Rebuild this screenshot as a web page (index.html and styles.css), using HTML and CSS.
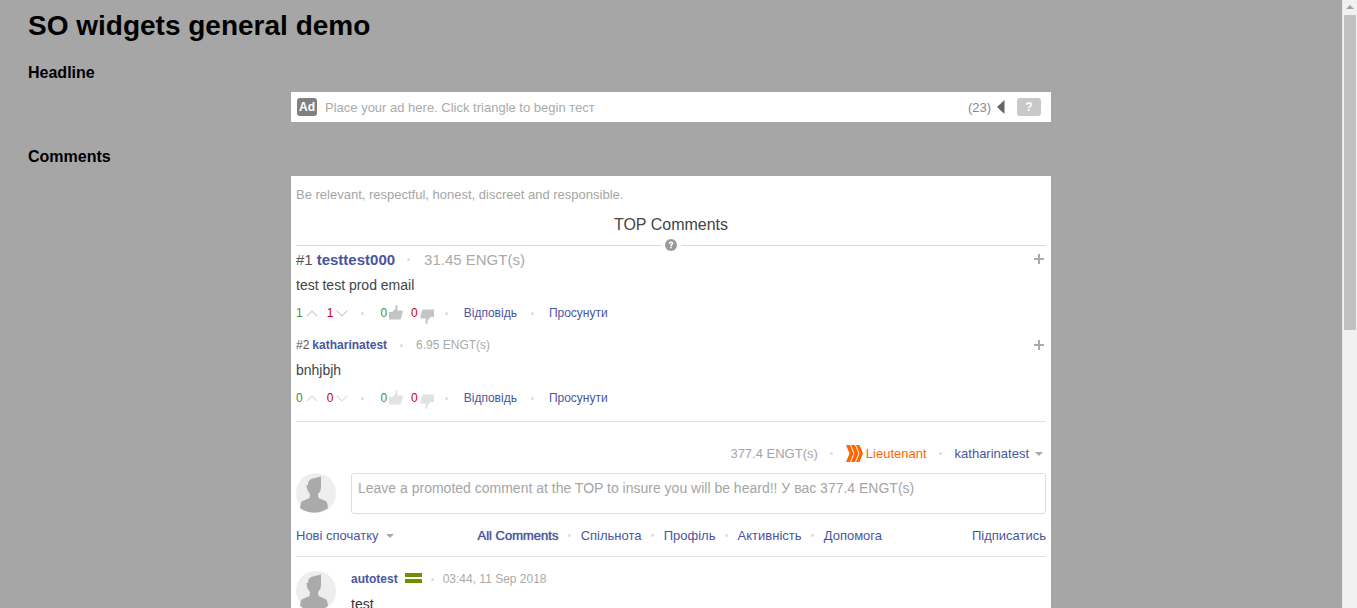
FILE: index.html
```html
<!DOCTYPE html>
<html lang="en">
<head>
  <meta charset="UTF-8">
  <title>SO widgets general demo</title>
  <link rel="stylesheet" href="styles.css">
</head>
<body>
<div class="page">
  <h1>SO widgets general demo</h1>

  <h3 class="section-head">Headline</h3>
  <div class="ad-bar">
    <span class="ad-badge">Ad</span>
    <span class="ad-text">Place your ad here. Click triangle to begin тест</span>
    <span class="ad-count">(23)</span>
    <svg class="ad-triangle" width="8" height="14" viewBox="0 0 8 14"><path d="M7.5 0v14L0 7z" fill="#666"/></svg>
    <span class="ad-help">?</span>
  </div>

  <h3 class="section-head section-comments">Comments</h3>
  <div class="widget">
    <p class="rules">Be relevant, respectful, honest, discreet and responsible.</p>
    <div class="top-title">TOP Comments</div>
    <div class="top-divider">
      <svg class="help-icon" width="12" height="12" viewBox="0 0 12 12">
        <circle cx="6" cy="6" r="6" fill="#999"/>
        <path d="M3.700 4.700c0-1.400 1-2.300 2.400-2.300s2.300.8 2.300 1.900c0 1.500-1.600 1.500-1.600 2.700H5.200c0-1.800 1.500-1.700 1.500-2.500 0-.4-.2-.7-.7-.7s-.7.300-.8.900z" fill="#fff"/>
        <rect x="5.200" y="7.700" width="1.600" height="1.600" fill="#fff"/>
      </svg>
    </div>

    <div class="top-comment first">
      <div class="tc-head">
        <span class="rank">#1</span>
        <a class="tc-name">testtest000</a>
        <span class="dot"></span>
        <span class="tc-score">31.45 ENGT(s)</span>
        <svg class="plus" width="10" height="10" viewBox="0 0 10 10"><path d="M4 0h2v4h4v2H6v4H4V6H0V4h4z" fill="#aaa"/></svg>
      </div>
      <div class="tc-body">test test prod email</div>
      <div class="actions">
        <span class="num green">1</span>
        <svg class="chev" width="12" height="7" viewBox="0 0 12 7"><path d="M.7 6.300 6 1l5.300 5.300" fill="none" stroke="#ccc" stroke-width="1.200"/></svg>
        <span class="num red">1</span>
        <svg class="chev" width="12" height="7" viewBox="0 0 12 7"><path d="M.7.700 6 6 11.300.700" fill="none" stroke="#ccc" stroke-width="1.200"/></svg>
        <span class="dot d1"></span>
        <span class="num green">0</span>
        <svg class="thumb" width="14" height="15" viewBox="0 0 14 15"><path d="M0 7h3.500l3-3.500V0c2 0 2.500 1.500 2 3L8 5.500h4.500c1 0 1.500 1 1.200 1.800L12 13.500c-.3.700-.8 1-1.500 1H0z" fill="#c4c4c4"/></svg>
        <span class="num red">0</span>
        <svg class="thumb down" width="14" height="15" viewBox="0 0 14 15"><path d="M0 7h3.500l3-3.500V0c2 0 2.500 1.500 2 3L8 5.500h4.500c1 0 1.500 1 1.200 1.800L12 13.500c-.3.700-.8 1-1.500 1H0z" fill="#c4c4c4" transform="rotate(180 7 7.500)"/></svg>
        <span class="dot d2"></span>
        <a class="link">Відповідь</a>
        <span class="dot d3"></span>
        <a class="link">Просунути</a>
      </div>
    </div>

    <div class="top-comment second">
      <div class="tc-head small">
        <span class="rank">#2</span>
        <a class="tc-name">katharinatest</a>
        <span class="dot"></span>
        <span class="tc-score">6.95 ENGT(s)</span>
        <svg class="plus" width="10" height="10" viewBox="0 0 10 10"><path d="M4 0h2v4h4v2H6v4H4V6H0V4h4z" fill="#aaa"/></svg>
      </div>
      <div class="tc-body">bnhjbjh</div>
      <div class="actions faded">
        <span class="num green">0</span>
        <svg class="chev" width="12" height="7" viewBox="0 0 12 7"><path d="M.7 6.300 6 1l5.300 5.300" fill="none" stroke="#ddd" stroke-width="1.200"/></svg>
        <span class="num red">0</span>
        <svg class="chev" width="12" height="7" viewBox="0 0 12 7"><path d="M.7.700 6 6 11.300.700" fill="none" stroke="#ddd" stroke-width="1.200"/></svg>
        <span class="dot d1"></span>
        <span class="num green">0</span>
        <svg class="thumb" width="14" height="15" viewBox="0 0 14 15"><path d="M0 7h3.500l3-3.500V0c2 0 2.500 1.500 2 3L8 5.500h4.500c1 0 1.500 1 1.200 1.800L12 13.500c-.3.700-.8 1-1.500 1H0z" fill="#e2e2e2"/></svg>
        <span class="num red">0</span>
        <svg class="thumb down" width="14" height="15" viewBox="0 0 14 15"><path d="M0 7h3.500l3-3.500V0c2 0 2.500 1.500 2 3L8 5.500h4.500c1 0 1.500 1 1.200 1.800L12 13.500c-.3.700-.8 1-1.500 1H0z" fill="#e2e2e2" transform="rotate(180 7 7.500)"/></svg>
        <span class="dot d2"></span>
        <a class="link">Відповідь</a>
        <span class="dot d3"></span>
        <a class="link">Просунути</a>
      </div>
    </div>

    <div class="balance-row">
      <span class="balance">377.4 ENGT(s)</span>
      <span class="dot"></span>
      <svg class="rank-icon" width="17" height="17" viewBox="0 0 17 17"><path d="M0 0h4l3.500 8.500L4 17H0l3.500-8.500zM5 0h4l3.500 8.500L9 17H5l3.500-8.500zM10 0h3.500L17 8.500 13.500 17H10l3.500-8.500z" fill="#f60"/></svg>
      <span class="rank-name">Lieutenant</span>
      <span class="dot"></span>
      <a class="user-menu">katharinatest</a>
      <span class="caret"></span>
    </div>

    <div class="composer">
      <svg class="avatar" width="40" height="40" viewBox="0 0 40 40"><use href="#person"/></svg>
      <div class="comment-box">Leave a promoted comment at the TOP to insure you will be heard!! У вас 377.4 ENGT(s)</div>
    </div>

    <div class="tabs">
      <a class="link sort">Нові спочатку</a>
      <span class="caret"></span>
      <div class="tab-links">
        <a class="link active">All Comments</a>
        <span class="dot"></span>
        <a class="link">Спільнота</a>
        <span class="dot"></span>
        <a class="link">Профіль</a>
        <span class="dot"></span>
        <a class="link">Активність</a>
        <span class="dot"></span>
        <a class="link">Допомога</a>
      </div>
      <a class="link subscribe">Підписатись</a>
    </div>

    <div class="comment">
      <svg class="avatar" width="40" height="40" viewBox="0 0 40 40"><use href="#person"/></svg>
      <div class="comment-main">
        <div class="comment-head">
          <a class="comment-name">autotest</a>
          <span class="flag"></span>
          <span class="dot"></span>
          <span class="comment-time">03:44, 11 Sep 2018</span>
        </div>
        <div class="comment-text">test</div>
      </div>
    </div>
  </div>
</div>

<div class="scrollbar">
  <div class="scroll-arrow"></div>
  <div class="scroll-thumb"></div>
</div>

<svg width="0" height="0" class="defs">
  <symbol id="person" viewBox="0 0 40 40">
    <circle cx="20" cy="20" r="20" fill="#eee"/>
    <path d="M12 12c0-4 2-6 5-6.500L25 3.500V14c0 3-1 5-3 7l.5 4 7 3c1.500.700 2 3 2.500 7-3 2.500-7.500 4-12 4.500h-4c-5-.5-9-2-12-4.500.5-4 1-6.300 2.500-7l7-3 .5-4c-2-2-3.500-5-3.500-9z" fill="#aaa"/>
  </symbol>
</svg>
</body>
</html>
```

FILE: styles.css
```css
html, body {
  height: 100%;
}

body {
  margin: 0;
  display: flex;
  overflow: hidden;
  font-family: "Liberation Sans", Arial, sans-serif;
  background-color: #a6a6a6;
  color: #333;
}

.page {
  flex: 1;
  min-width: 0;
  height: 100%;
  overflow: hidden;
}

h1 {
  margin: 0 0 0 28px;
  padding-top: 10px;
  font-size: 28px;
  line-height: 32px;
  font-weight: bold;
  color: #000;
}

.section-head {
  margin: 21px 0 9px 28px;
  font-size: 16px;
  line-height: 20px;
  font-weight: bold;
  color: #000;
}

.section-comments {
  margin-top: 25px;
}

/* ad bar */
.ad-bar {
  display: flex;
  align-items: center;
  width: 760px;
  height: 30px;
  margin: 0 auto;
  padding: 0 10px 0 6px;
  box-sizing: border-box;
  background-color: #fff;
  font-size: 13px;
  color: #aaa;
}

.ad-badge {
  width: 20px;
  height: 18px;
  border-radius: 3px;
  background-color: #808080;
  color: #fff;
  font-weight: bold;
  font-size: 12px;
  line-height: 18px;
  text-align: center;
}

.ad-text {
  flex: 1;
  margin-left: 8px;
}

.ad-count {
  color: #888;
}

.ad-triangle {
  margin-left: 6px;
}

.ad-help {
  width: 24px;
  height: 18px;
  margin-left: 12px;
  border-radius: 3px;
  background-color: #c8c8c8;
  color: #fff;
  font-weight: bold;
  font-size: 12px;
  line-height: 18px;
  text-align: center;
}

/* comments widget */
.widget {
  width: 760px;
  margin: 0 auto;
  padding: 10px 5px 0;
  box-sizing: border-box;
  background-color: #fff;
}

.rules {
  margin: 0;
  font-size: 13px;
  line-height: 17px;
  color: #a5a5a5;
}

.top-title {
  margin-top: 12px;
  font-size: 16px;
  line-height: 20px;
  text-align: center;
  color: #444;
}

.top-divider {
  display: flex;
  justify-content: center;
  height: 1px;
  margin-top: 10px;
  background-color: #d8d8d8;
}

.help-icon {
  flex: none;
  margin-top: -6px;
  padding: 0 4px;
  background-color: #fff;
  box-sizing: content-box;
}

.dot {
  flex: none;
  width: 3px;
  height: 3px;
  border-radius: 50%;
  background-color: #ddd;
}

.tc-head {
  display: flex;
  align-items: center;
  height: 20px;
  margin-top: 3px;
  font-size: 15px;
}

.tc-head .rank {
  color: #555;
}

.tc-name {
  margin-left: 4px;
  font-weight: bold;
  color: #4a55a0;
}

.tc-head .dot {
  margin: 0 14px 0 12px;
}

.tc-score {
  flex: 1;
  color: #aaa;
}

.plus {
  flex: none;
  margin-right: 2px;
}

.tc-body {
  margin-top: 6px;
  font-size: 14px;
  line-height: 20px;
  color: #444;
}

.actions {
  display: flex;
  align-items: center;
  height: 20px;
  margin-top: 8px;
  font-size: 12px;
}

.num.green {
  color: #3f8f3f;
}

.num.red {
  color: #c00;
}

.chev {
  margin: 0 9px 0 3px;
}

.thumb {
  margin: 0 8px 0 2px;
}

.actions .thumb {
  margin-top: -2px;
}

.actions .thumb.down {
  margin-top: 6px;
}

.actions .d1 {
  margin: 0 16px 0 4px;
}

.actions .d2 {
  margin: 0 16px 0 3px;
}

.actions .d3 {
  margin: 0 15px 0 14px;
}

.link {
  color: #4a55a0;
}

.top-comment.second {
  margin-top: 12px;
}

.tc-head.small {
  font-size: 12px;
}

.tc-head.small .tc-name {
  margin-left: 3px;
}

.tc-head.small .dot {
  margin: 0 14px 0 13px;
}

.tc-head.small .tc-score {
  margin-left: -1px;
}

.second .tc-body {
  margin-top: 5px;
}

.second .actions {
  margin-top: 8px;
  padding-bottom: 13px;
  border-bottom: 1px solid #e2e2e2;
  box-sizing: content-box;
}

.balance-row {
  display: flex;
  align-items: center;
  justify-content: flex-end;
  height: 20px;
  margin-top: 21px;
  font-size: 13px;
}

.balance {
  color: #a5a5a5;
}

.balance-row .dot {
  margin: 0 13px 0 12px;
}

.rank-icon {
  margin-right: 3px;
}

.rank-name {
  color: #f60;
}

.user-menu {
  color: #4a55a0;
}

.caret {
  flex: none;
  width: 0;
  height: 0;
  margin-left: 6px;
  margin-right: 3px;
  border-left: 4px solid transparent;
  border-right: 4px solid transparent;
  border-top: 4px solid #aaa;
}

.balance-row .caret {
  margin-right: 3px;
  margin-top: 2px;
}

.composer {
  display: flex;
  gap: 15px;
  margin-top: 10px;
}

.avatar {
  flex: none;
}

.comment-box {
  flex: 1;
  height: 41px;
  padding: 6px;
  box-sizing: border-box;
  border: 1px solid #ddd;
  border-radius: 3px;
  font-size: 14px;
  line-height: 17px;
  color: #a5a5a5;
}

.tabs {
  display: flex;
  align-items: center;
  height: 42px;
  border-bottom: 1px solid #e2e2e2;
  font-size: 13px;
}

.tabs .caret {
  margin-left: 7px;
  margin-top: 2px;
}

.tab-links {
  display: flex;
  align-items: center;
  margin-left: 81px;
}

.tab-links .dot {
  margin: 0 9.6px;
}

.link.active {
  text-shadow: 0 0 1px #4a55a0;
}

.subscribe {
  margin-left: auto;
}

.comment {
  display: flex;
  gap: 15px;
  margin-top: 14px;
}

.comment-head {
  display: flex;
  align-items: center;
  height: 16px;
  font-size: 12px;
}

.comment-name {
  font-weight: bold;
  color: #4a55a0;
}

.flag {
  width: 17px;
  height: 10px;
  margin-left: 7px;
  margin-top: -2px;
  border-top: 4px solid #6e8f00;
  border-bottom: 4px solid #6e8f00;
  box-sizing: border-box;
}

.comment-head .dot {
  margin: 0 9px;
}

.comment-time {
  color: #aaa;
}

.comment-text {
  margin-top: 7px;
  font-size: 14px;
  line-height: 20px;
  color: #333;
}

/* fake scrollbar, the screenshot has one */
.scrollbar {
  flex: none;
  width: 15px;
  height: 100%;
  background-color: #f1f1f1;
  border-left: 1px solid #e7e7e7;
  box-sizing: border-box;
}

.scroll-arrow {
  width: 0;
  height: 0;
  margin: 5px auto 0;
  border-left: 4px solid transparent;
  border-right: 4px solid transparent;
  border-bottom: 4px solid #a3a3a3;
}

.scroll-thumb {
  height: 315px;
  margin: 6px 1px 0;
  background-color: #c1c1c1;
}

.defs {
  position: absolute;
}
```
